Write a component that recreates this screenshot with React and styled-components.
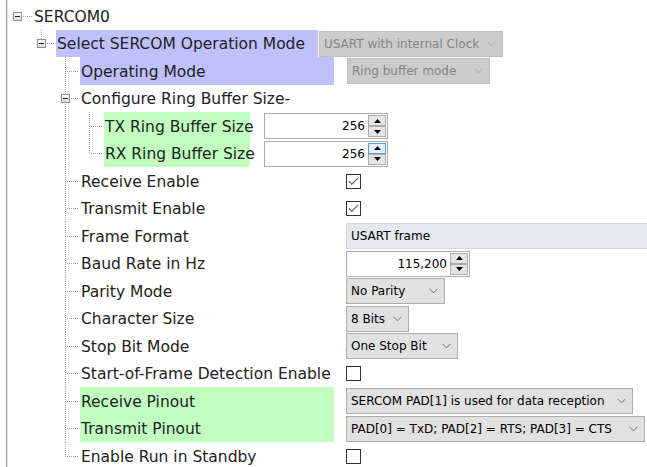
import React from 'react';
import styled, { createGlobalStyle } from 'styled-components';

const GlobalStyle = createGlobalStyle`
  html, body { margin: 0; padding: 0; background: #ffffff; }
  body { width: 647px; height: 467px; overflow: hidden; }
`;

const Frame = styled.div`
  width: 647px;
  height: 467px;
  box-sizing: border-box;
  padding-left: 6px;
  background: #ffffff;
  overflow: hidden;
`;

const Panel = styled.div`
  height: 100%;
  box-sizing: border-box;
  border-left: 1px solid #a0a0a0;
  box-shadow: inset 1px 0 0 #e4e4e4;
  padding: 2px 0 0 1px;
  display: flex;
  flex-direction: column;
  font-family: "DejaVu Sans", Verdana, sans-serif;
  font-size: 15.5px;
  color: #222222;
`;

const Row = styled.div`
  display: flex;
  align-items: stretch;
  flex: none;
  height: ${p => p.$h}px;
`;

const GuideSvg = styled.svg`
  display: block;
  flex: none;
  width: 24px;
`;

const Label = styled.div`
  flex: none;
  display: flex;
  align-items: center;
  box-sizing: border-box;
  width: ${p => (p.$width ? `${p.$width}px` : 'auto')};
  padding-left: ${p => p.$pad}px;
  padding-top: 1px;
  white-space: nowrap;
  background: ${p =>
    p.$hl === 'purple' ? '#c0c0ff' : p.$hl === 'green' ? '#c0ffc0' : 'transparent'};
`;

const Value = styled.div`
  flex: 1;
  min-width: 0;
  display: flex;
  align-items: center;
  margin-left: ${p => p.$gap}px;
  font-family: "DejaVu Sans", Verdana, sans-serif;
  font-size: 12px;
  color: #000000;
`;

const Select = styled.div`
  flex: none;
  display: flex;
  align-items: center;
  box-sizing: border-box;
  height: 26px;
  width: ${p => p.$width}px;
  padding: 0 6px 0 4px;
  border: 1px solid ${p => (p.$disabled ? '#bfbfbf' : '#adadad')};
  background: ${p => (p.$disabled ? '#cccccc' : '#e1e1e1')};
  color: ${p => (p.$disabled ? '#838383' : '#000000')};
  white-space: nowrap;
`;

const SelectText = styled.span`
  flex: 1;
  overflow: hidden;
`;

const Chevron = styled.svg`
  flex: none;
  display: block;
  width: 9px;
  height: 6px;
`;

const Spinner = styled.div`
  flex: none;
  display: flex;
  box-sizing: border-box;
  width: 124px;
  height: 26px;
  border: 1px solid #acacac;
  background: #ffffff;
`;

const SpinValue = styled.div`
  flex: 1;
  display: flex;
  align-items: center;
  justify-content: flex-end;
  padding-right: 3px;
`;

const SpinButtons = styled.div`
  flex: none;
  width: 18px;
  display: flex;
  flex-direction: column;
  padding: 1px 1px 1px 0;
`;

const SpinButton = styled.div`
  flex: 1;
  display: flex;
  align-items: center;
  justify-content: center;
  border: 1px solid ${p => (p.$hover ? '#569de5' : '#adadad')};
  background: ${p => (p.$hover ? '#e5f1fb' : '#e5e5e5')};
`;

const Arrow = styled.svg`
  display: block;
  width: 7px;
  height: 4px;
`;

const Check = styled.div`
  flex: none;
  width: 15px;
  height: 15px;
  box-sizing: border-box;
  border: 1px solid #333333;
  background: #ffffff;
  display: flex;
  align-items: center;
  justify-content: center;
`;

const TextField = styled.div`
  flex: 1;
  display: flex;
  align-items: center;
  box-sizing: border-box;
  height: 26px;
  padding-left: 4px;
  background: #e4e9ef;
  border: 1px solid #d3d9df;
  border-right: none;
  white-space: nowrap;
`;

const LINE = '#a0a0a0';

function Guide({ kind, h }) {
  const cy = Math.floor(h / 2);
  const dots = { stroke: LINE, strokeWidth: 1, strokeDasharray: '1 1', shapeRendering: 'crispEdges' };
  const parts = [];
  if (kind === 'pass') {
    parts.push(<line key="v" x1="9.5" y1="0" x2="9.5" y2={h} {...dots} />);
  } else if (kind === 'tee' || kind === 'elbow') {
    parts.push(
      <line key="v" x1="9.5" y1="0" x2="9.5" y2={kind === 'tee' ? h : cy + 1} {...dots} />
    );
    parts.push(<line key="h" x1="11" y1={cy + 0.5} x2="23" y2={cy + 0.5} {...dots} />);
  } else if (kind && kind.box) {
    if (kind.up) parts.push(<line key="u" x1="9.5" y1="0" x2="9.5" y2={cy - 4} {...dots} />);
    if (kind.down) parts.push(<line key="d" x1="9.5" y1={cy + 6} x2="9.5" y2={h} {...dots} />);
    parts.push(<line key="h" x1="15" y1={cy + 0.5} x2={kind.hEnd || 23} y2={cy + 0.5} {...dots} />);
    parts.push(
      <rect key="b" x="5.5" y={cy - 3.5} width="8" height="8" fill="url(#boxfill)" stroke="#8f8f8f" shapeRendering="crispEdges" />
    );
    parts.push(
      <line key="m" x1="7" y1={cy + 0.5} x2="12" y2={cy + 0.5} stroke="#1e1e1e" shapeRendering="crispEdges" />
    );
  }
  return (
    <GuideSvg height={h} viewBox={`0 0 24 ${h}`}>
      <defs>
        <linearGradient id="boxfill" x1="0" y1="0" x2="0" y2="1">
          <stop offset="0" stopColor="#ffffff" />
          <stop offset="1" stopColor="#dcdcdc" />
        </linearGradient>
      </defs>
      {parts}
    </GuideSvg>
  );
}

function ChevronIcon({ color }) {
  return (
    <Chevron viewBox="0 0 9 6">
      <polyline points="0.5,0.8 4.5,4.8 8.5,0.8" fill="none" stroke={color} strokeWidth="1" />
    </Chevron>
  );
}

function Dropdown({ value, width, disabled }) {
  return (
    <Select $width={width} $disabled={disabled}>
      <SelectText>{value}</SelectText>
      <ChevronIcon color={disabled ? '#a8a8a8' : '#6d6d6d'} />
    </Select>
  );
}

function Spin({ value, hover }) {
  return (
    <Spinner>
      <SpinValue>{value}</SpinValue>
      <SpinButtons>
        <SpinButton $hover={hover}>
          <Arrow viewBox="0 0 7 4">
            <polygon points="3.5,0 7,4 0,4" fill="#000" />
          </Arrow>
        </SpinButton>
        <SpinButton>
          <Arrow viewBox="0 0 7 4">
            <polygon points="0,0 7,0 3.5,4" fill="#000" />
          </Arrow>
        </SpinButton>
      </SpinButtons>
    </Spinner>
  );
}

function CheckBox({ checked }) {
  return (
    <Check>
      {checked && (
        <svg width="11" height="9" viewBox="0 0 11 9">
          <polyline points="0.8,4.2 3.8,7.2 10.2,0.8" fill="none" stroke="#5a5a5a" strokeWidth="1.1" />
        </svg>
      )}
    </Check>
  );
}

function Control({ c }) {
  if (!c) return null;
  if (c.type === 'select') return <Dropdown value={c.value} width={c.width} disabled={c.disabled} />;
  if (c.type === 'spin') return <Spin value={c.value} hover={c.hover} />;
  if (c.type === 'check') return <CheckBox checked={c.checked} />;
  if (c.type === 'text') return <TextField>{c.value}</TextField>;
  return null;
}

const D2 = ['blank', 'blank', 'tee'];

const ROWS = [
  { label: 'SERCOM0', pad: 2, cells: [{ box: true, hEnd: 24 }] },
  {
    label: 'Select SERCOM Operation Mode', hl: 'purple', width: 262,
    cells: ['blank', { box: true, up: true }],
    control: { type: 'select', disabled: true, value: 'USART with internal Clock', width: 184 }, gap: 1,
  },
  {
    label: 'Operating Mode', hl: 'purple', cells: D2,
    control: { type: 'select', disabled: true, value: 'Ring buffer mode', width: 143 }, gap: 13,
  },
  { label: 'Configure Ring Buffer Size-', cells: ['blank', 'blank', { box: true, up: true, down: true }] },
  {
    label: 'TX Ring Buffer Size', hl: 'green', width: 146,
    cells: ['blank', 'blank', 'pass', 'tee'],
    control: { type: 'spin', value: '256' }, gap: 14,
  },
  {
    label: 'RX Ring Buffer Size', hl: 'green', width: 146,
    cells: ['blank', 'blank', 'pass', 'elbow'],
    control: { type: 'spin', value: '256', hover: true }, gap: 14,
  },
  { label: 'Receive Enable', cells: D2, control: { type: 'check', checked: true } },
  { label: 'Transmit Enable', cells: D2, control: { type: 'check', checked: true } },
  { label: 'Frame Format', cells: D2, control: { type: 'text', value: 'USART frame' } },
  { label: 'Baud Rate in Hz', cells: D2, control: { type: 'spin', value: '115,200' } },
  { label: 'Parity Mode', cells: D2, control: { type: 'select', value: 'No Parity', width: 99 } },
  { label: 'Character Size', cells: D2, control: { type: 'select', value: '8 Bits', width: 63 } },
  { label: 'Stop Bit Mode', cells: D2, control: { type: 'select', value: 'One Stop Bit', width: 112 } },
  { label: 'Start-of-Frame Detection Enable', cells: D2, control: { type: 'check', checked: false } },
  {
    label: 'Receive Pinout', hl: 'green', cells: D2,
    control: { type: 'select', value: 'SERCOM PAD[1] is used for data reception', width: 287 },
  },
  {
    label: 'Transmit Pinout', hl: 'green', cells: D2,
    control: { type: 'select', value: 'PAD[0] = TxD; PAD[2] = RTS; PAD[3] = CTS', width: 299 },
  },
  { label: 'Enable Run in Standby', cells: ['blank', 'blank', 'elbow'], control: { type: 'check', checked: false } },
];

export default function App() {
  return (
    <Frame>
      <GlobalStyle />
      <Panel>
        {ROWS.map((r, i) => {
          const h = i % 2 === 0 ? 28 : 27;
          const depth = r.cells.length - 1;
          const width = r.width || (depth === 2 && r.control ? 254 : undefined);
          return (
            <Row key={r.label} $h={h}>
              {r.cells.map((k, j) => (
                <Guide key={j} kind={k} h={h} />
              ))}
              <Label $hl={r.hl} $width={width} $pad={r.pad || 1}>
                {r.label}
              </Label>
              {r.control && (
                <Value $gap={r.gap != null ? r.gap : 12}>
                  <Control c={r.control} />
                </Value>
              )}
            </Row>
          );
        })}
      </Panel>
    </Frame>
  );
}
